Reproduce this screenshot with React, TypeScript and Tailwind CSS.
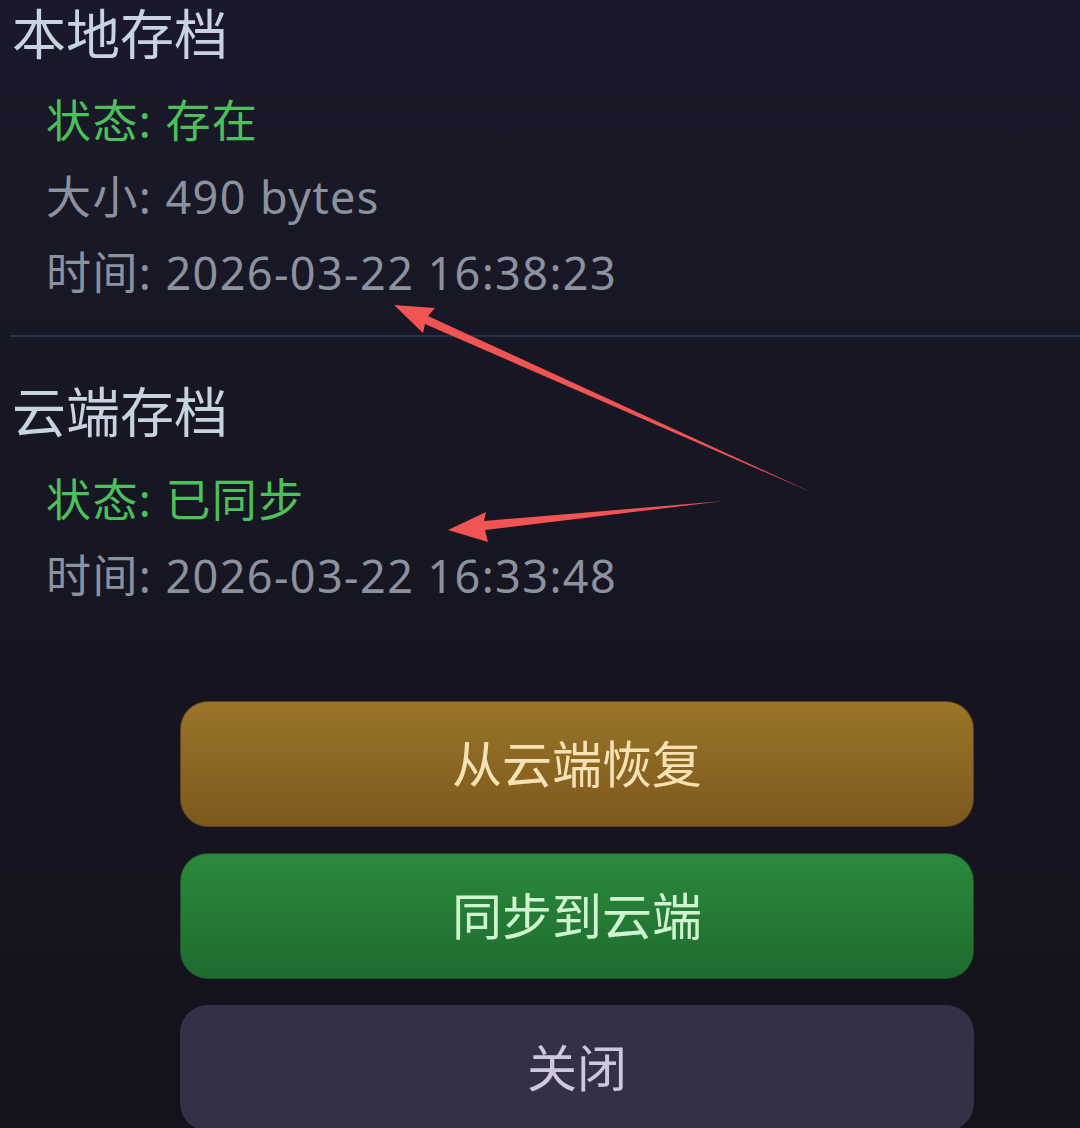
const cjk = { fontFamily: '"Noto Sans", "Noto Sans CJK SC", sans-serif' };

function Row({ label, value, green }: { label: string; value: string; green?: boolean }) {
  return (
    <div className={`h-[76px] leading-[76px] text-[45px] tracking-[1.4px] ${green ? 'text-[#4cc05a]' : 'text-[#8b929e]'}`}>
      {label}: {value}
    </div>
  );
}

function Arrows() {
  return (
    <svg className="absolute inset-0 pointer-events-none" width="1080" height="1128" viewBox="0 0 1080 1128">
      <g fill="#f25353">
        <polygon points="394,305 435,308 428,316 813,493 425,324 423,333" />
        <polygon points="448,530 486,512 484,521 724,501 485,530 488,542" />
      </g>
    </svg>
  );
}

export default function App() {
  return (
    <div className="relative w-[1080px] h-[1128px] overflow-hidden bg-gradient-to-b from-[#1a1929] to-[#13121c]" style={cjk}>
      <div className="flex flex-col">
        <div className="pl-3 h-[68px] leading-[68px] text-[54px] text-[#c8d3e0]">本地存档</div>
        <div className="pl-[46px] mt-[15px] flex flex-col">
          <Row label="状态" value="存在" green />
          <Row label="大小" value="490 bytes" />
          <Row label="时间" value="2026-03-22 16:38:23" />
        </div>
        <div className="ml-[10px] mt-[24px] h-[2px] bg-[#283048]" />
        <div className="pl-3 mt-[43px] h-[64px] leading-[64px] text-[54px] text-[#c8d3e0]">云端存档</div>
        <div className="pl-[46px] mt-[18px] flex flex-col">
          <Row label="状态" value="已同步" green />
          <Row label="时间" value="2026-03-22 16:33:48" />
        </div>
        <div className="mt-[87px] ml-[180px] w-[794px] flex flex-col gap-[26px]">
          <button className="h-[126px] rounded-[28px] bg-gradient-to-b from-[#9a7529] to-[#7d581d] border border-[#5e4318] text-[50px] text-[#f8e2b4]">
            从云端恢复
          </button>
          <button className="h-[126px] rounded-[28px] bg-gradient-to-b from-[#2a8a3c] to-[#1f6b2e] border border-[#1a5526] text-[50px] text-[#cff5cf]">
            同步到云端
          </button>
          <button className="h-[126px] rounded-[28px] bg-[#343146] text-[50px] text-[#cfc7e0]">
            关闭
          </button>
        </div>
      </div>
      <Arrows />
    </div>
  );
}
